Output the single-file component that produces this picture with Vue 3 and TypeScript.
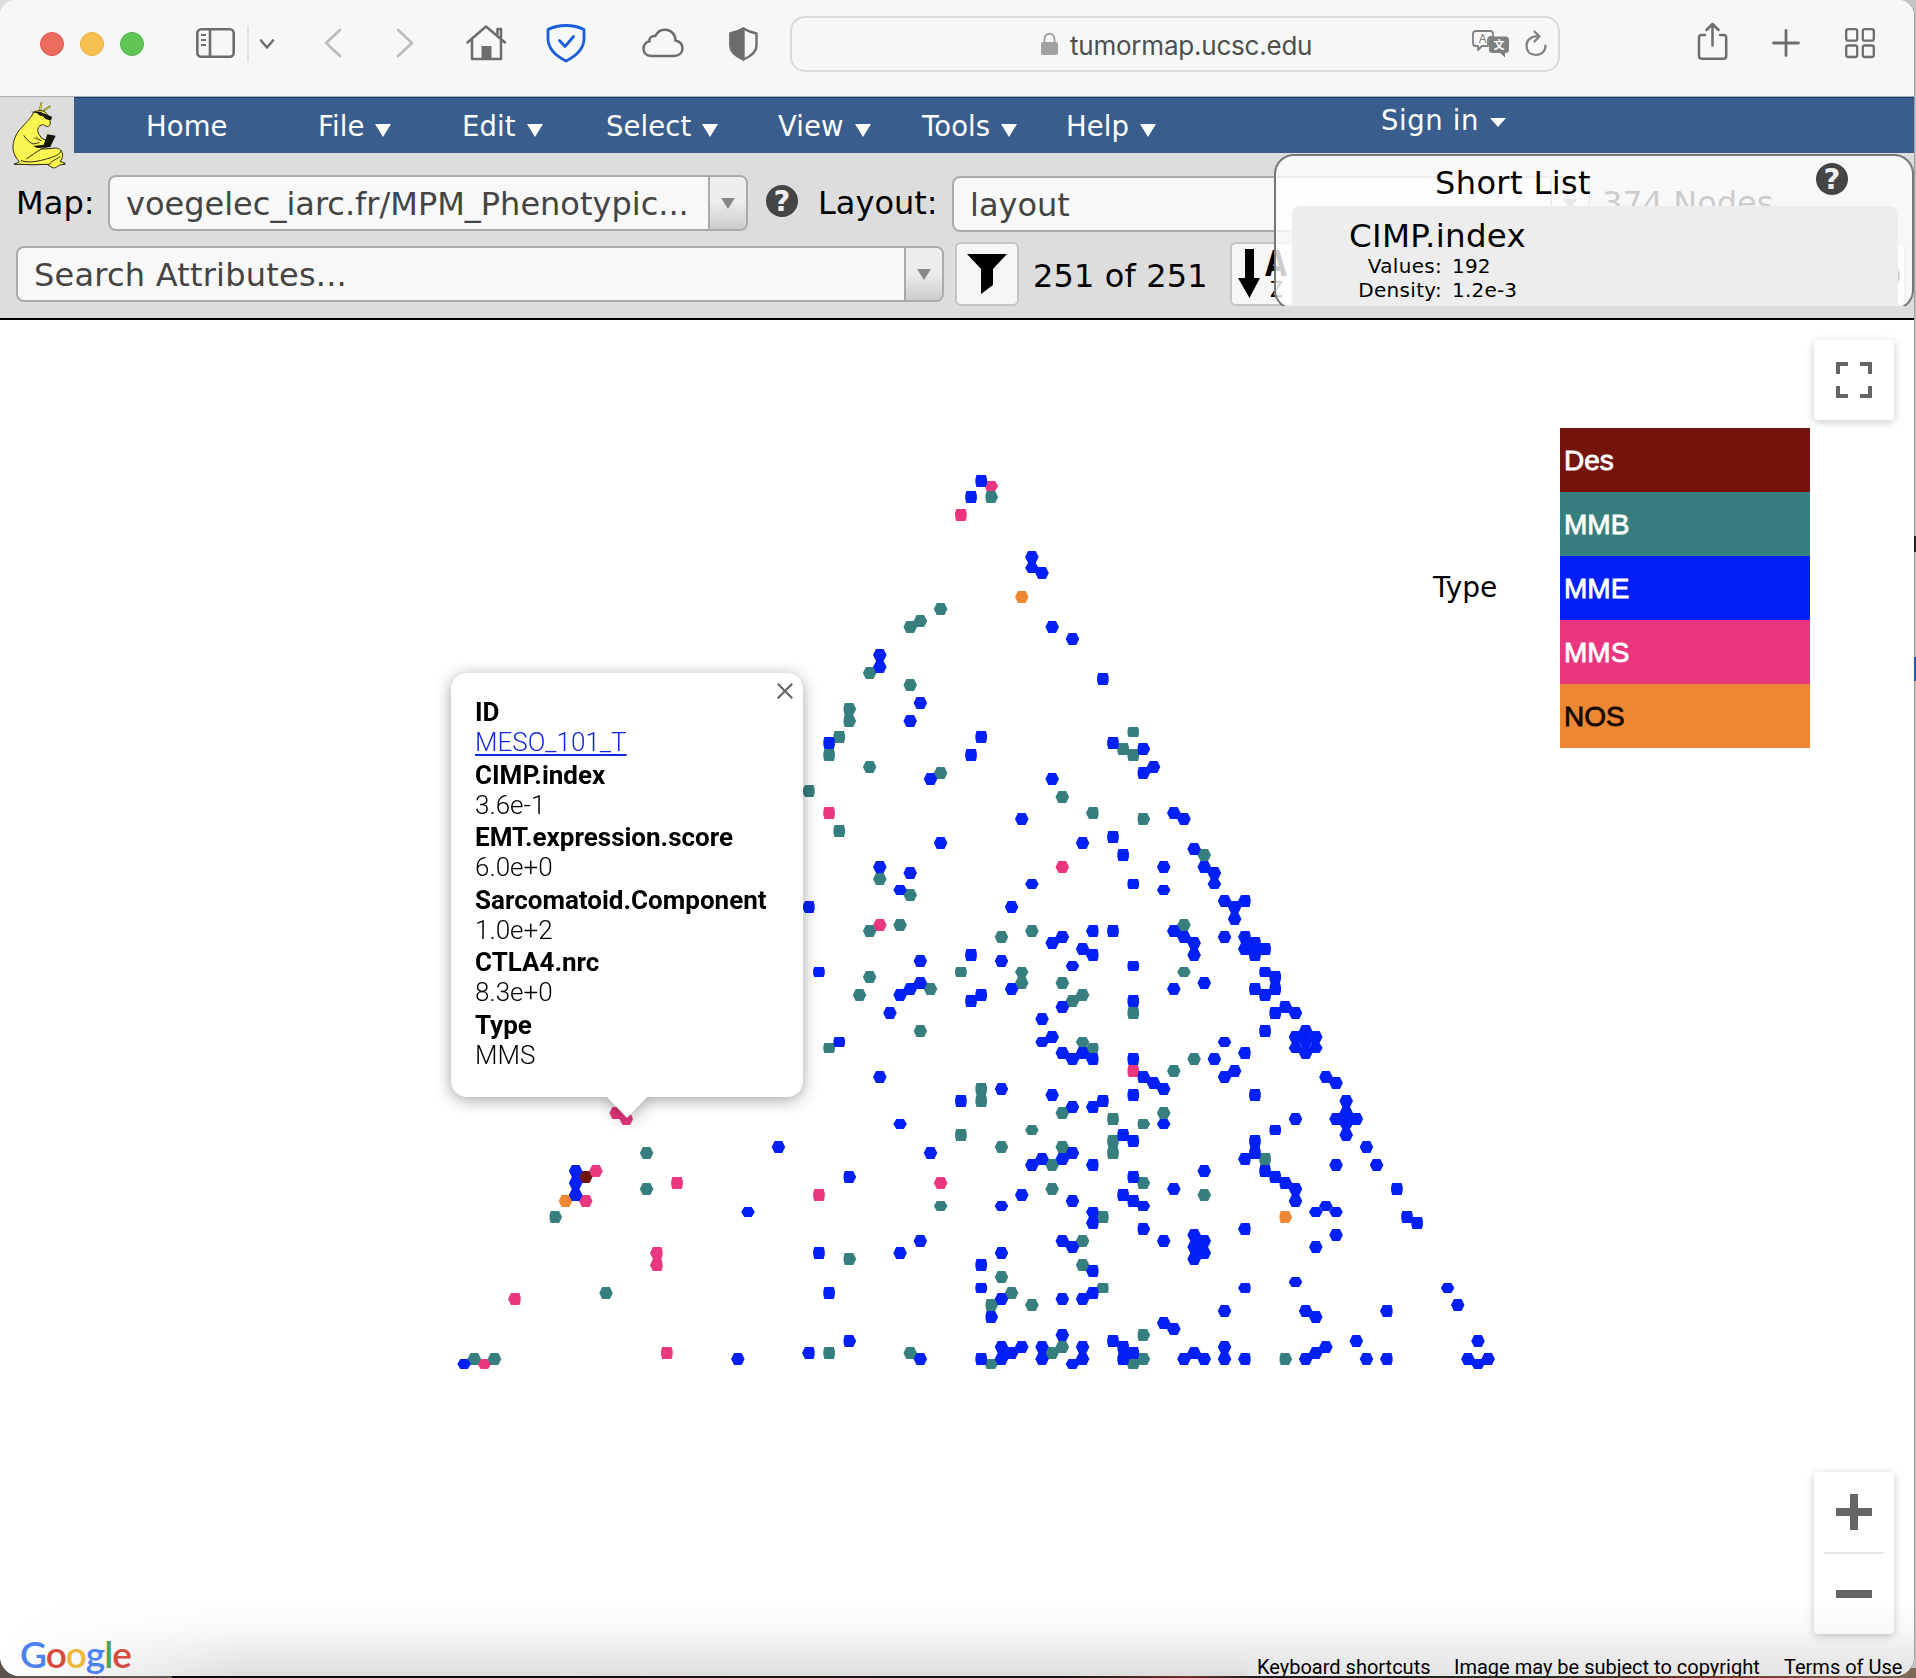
<script setup lang="ts">
interface Hexagon { col: number; y: number; kind: string; path: string }
interface MenuItem { label: string; width: number; arrow: boolean }

const menus: MenuItem[] = [
  { label: 'Home', width: 172, arrow: false },
  { label: 'File', width: 144, arrow: true },
  { label: 'Edit', width: 144, arrow: true },
  { label: 'Select', width: 172, arrow: true },
  { label: 'View', width: 144, arrow: true },
  { label: 'Tools', width: 144, arrow: true },
  { label: 'Help', width: 314, arrow: true },
]

const legend = [
  { label: 'Des', color: '#75140c', text: '#fff' },
  { label: 'MMB', color: '#377e7f', text: '#fff' },
  { label: 'MME', color: '#0020f5', text: '#fff' },
  { label: 'MMS', color: '#ea367f', text: '#fff' },
  { label: 'NOS', color: '#ee8733', text: '#140a00' },
]

const details = [
  { name: 'ID', value: 'MESO_101_T', link: true },
  { name: 'CIMP.index', value: '3.6e-1', link: false },
  { name: 'EMT.expression.score', value: '6.0e+0', link: false },
  { name: 'Sarcomatoid.Component', value: '1.0e+2', link: false },
  { name: 'CTLA4.nrc', value: '8.3e+0', link: false },
  { name: 'Type', value: 'MMS', link: false },
]

// Node positions per type: "column,y" on the hexagonal grid.
const nodes: Record<string, string> = {
  Des: '12,1177',
  NOS: '55,597 10,1201 81,1217',
  MMS: '52,486 49,515 36,813 59,867 41,925 66,1071 47,1183 35,1195 2,1364 5,1299 13,1171 12,1201 15,1113 16,1119 21,1183 19,1253 19,1265 20,1353',
  MMB: `52,497 47,609 45,621 44,627 40,673 44,685 38,709 38,721 37,737 36,755 40,767 34,791 37,831 47,773 66,732 65,749
    66,755 59,797 62,813 67,819 41,879 44,895 73,855 71,925 71,972 66,1013 72,1059 40,931 43,925 53,937 56,931 49,972
    55,972 55,983 59,983 40,977 39,995 46,989 61,995 60,1001 45,1031 36,1048 61,1042 62,1048 51,1089 51,1101 59,1113
    64,1119 56,1130 49,1135 53,1147 59,1147 58,1165 64,1141 64,1153 58,1189 47,1206 63,1217 61,1241 38,1259 53,1277
    61,1265 54,1293 52,1305 56,1305 63,1288 36,1353 44,1353 52,1364 58,1353 59,1347 70,1071 69,1113 67,1124 79,1159
    67,1183 73,1195 67,1335 66,1364 67,1359 81,1359 1,1359 3,1359 9,1217 14,1293 18,1153 18,1189`,
  MME: `51,481 50,497 56,557 56,568 57,573 58,627 60,639 63,679 41,655 41,667 45,703 44,721 36,743 51,737 50,755 46,779
    58,779 64,743 67,749 68,767 67,773 70,813 71,819 55,819 47,843 61,843 64,837 65,855 72,849 69,867 69,890 66,884
    56,884 41,867 44,873 43,890 34,907 54,907 73,867 74,873 74,884 75,901 77,901 76,907 76,919 75,937 77,937 77,949
    78,943 78,955 79,949 79,972 80,977 80,989 78,989 79,995 81,1007 80,1013 82,1013 79,1031 83,1031 82,1037 84,1037
    83,1042 82,1048 84,1048 83,1053 70,931 71,937 72,943 72,955 62,931 64,931 61,949 62,955 66,966 73,983 70,989
    66,1001 75,1042 77,1053 74,1059 66,1059 58,943 59,937 50,955 53,961 60,966 45,961 35,972 54,989 45,983 44,989
    43,995 42,1013 51,995 50,1001 59,1007 57,1019 58,1037 57,1042 37,1042 59,1053 60,1059 61,1053 62,1059 41,1077
    53,1089 49,1101 58,1095 60,1107 62,1107 63,1101 43,1124 60,1153 59,1159 57,1159 56,1165 62,1165 46,1153 38,1177
    55,1195 60,1201 53,1206 62,1212 62,1223 59,1241 60,1247 45,1241 43,1253 35,1253 53,1253 51,1265 62,1271 51,1288
    53,1299 52,1317 59,1299 61,1299 62,1293 36,1293 38,1341 34,1353 45,1359 51,1359 53,1347 53,1359 54,1353 55,1347
    57,1347 57,1359 59,1335 61,1347 61,1359 60,1364 64,1341 67,1077 68,1083 69,1089 66,1095 75,1077 76,1071 78,1095
    85,1077 86,1083 87,1101 87,1113 87,1124 87,1135 86,1119 88,1119 82,1119 80,1130 69,1124 65,1135 66,1141 78,1141
    78,1153 77,1159 79,1171 80,1177 81,1183 82,1189 82,1201 86,1165 89,1147 90,1165 92,1189 93,1217 94,1223 84,1212
    85,1206 86,1212 86,1235 84,1247 66,1177 65,1195 66,1201 67,1206 70,1189 73,1171 67,1229 69,1241 72,1235 73,1241
    72,1247 73,1253 72,1259 77,1229 82,1282 77,1288 75,1311 83,1311 84,1317 91,1311 97,1288 98,1305 100,1341 88,1341
    69,1323 70,1329 65,1347 65,1359 66,1353 71,1359 72,1353 73,1359 75,1347 75,1359 77,1359 83,1359 84,1353 85,1347
    89,1359 91,1359 99,1359 100,1364 101,1359 0,1364 11,1171 11,1183 11,1195 27,1359 28,1212 31,1147`,
}

const MAP_TOP = 320
const rightFlat = [5, 19, 34, 48, 62, 77, 91]
const leftFlat = [9, 24, 38, 52, 67, 81, 95]

// Side points are clipped on columns that fall across a pixel boundary.
function hexPath(col: number, y: number): string {
  const cx = 464.1 + col * 10.139
  const cy = y - MAP_TOP
  const h = y % 2 ? 6 : 5
  const barrel = rightFlat.some((r, i) => col > r && col < leftFlat[i])
  const left = barrel || leftFlat.includes(col)
  const right = barrel || rightFlat.includes(col)
  const l = left
    ? `L${cx - 4.7} ${cy + h}L${cx - 5.8} ${cy + 2}L${cx - 5.8} ${cy - 2}L${cx - 4.7} ${cy - h}`
    : `L${cx - 3.8} ${cy + h}L${cx - 6.8} ${cy}L${cx - 3.8} ${cy - h}`
  const r = right
    ? `M${cx + 4.7} ${cy - h}L${cx + 5.8} ${cy - 2}L${cx + 5.8} ${cy + 2}L${cx + 4.7} ${cy + h}`
    : `M${cx + 3.8} ${cy - h}L${cx + 6.8} ${cy}L${cx + 3.8} ${cy + h}`
  return r + l + 'Z'
}

const hexagons: Hexagon[] = Object.entries(nodes).flatMap(([kind, list]) =>
  list.trim().split(/\s+/).map((pair) => {
    const [col, y] = pair.split(',').map(Number)
    return { col, y, kind, path: hexPath(col, y) }
  }),
)
const colorOf = (kind: string): string => legend.find((l) => l.label === kind)!.color
</script>

<template>
  <div class="desktop">
    <i class="speck dark"></i><i class="speck blue"></i>
    <div class="window">
      <div class="toolbar">
        <span class="light red"></span><span class="light yellow"></span><span class="light green"></span>
        <svg class="ic sidebar" width="42" height="34" viewBox="195 26 42 34" fill="none" stroke="#6c6e6d" stroke-width="2.6">
          <rect x="197.3" y="29.3" width="36.4" height="27.4" rx="4" /><path d="M210 29v28" />
          <path d="M201 35h5M201 40h5M201 45h5" stroke-width="2" />
        </svg>
        <span class="divider"></span>
        <svg class="ic chevron" width="16" height="12" viewBox="0 0 16 12" fill="none" stroke="#6c6e6d" stroke-width="2.6" stroke-linecap="round" stroke-linejoin="round"><path d="M2 2.5l6 7 6-7" /></svg>
        <svg class="ic back" width="18" height="30" viewBox="0 0 18 30" fill="none" stroke="#b9bbba" stroke-width="2.6" stroke-linecap="round" stroke-linejoin="round"><path d="M16 2L2 15l14 13" /></svg>
        <svg class="ic forward" width="18" height="30" viewBox="0 0 18 30" fill="none" stroke="#b9bbba" stroke-width="2.6" stroke-linecap="round" stroke-linejoin="round"><path d="M2 2l14 13L2 28" /></svg>
        <svg class="ic home" width="42" height="38" viewBox="466 23 42 38" fill="none" stroke="#6c6e6d" stroke-width="2.5" stroke-linejoin="round" stroke-linecap="round">
          <path d="M468.5 41.5L487 25.5l19 16M473 39v19h29V39M498.5 33v-5h3.5v8" /><path d="M482.5 58V45h10v13z" fill="#6c6e6d" stroke="none" />
        </svg>
        <svg class="ic adblock" width="42" height="40" viewBox="546 24 42 40" fill="none" stroke="#1b5cdc" stroke-width="2.8" stroke-linejoin="round" stroke-linecap="round">
          <path d="M567 26.5c7 0 13 1.5 18 4v9c0 10-8 17.5-18 22.5-10-5-18-12.5-18-22.5v-9c5-2.5 11-4 18-4z" /><path d="M560.5 41.5l5.5 6 8.5-10" />
        </svg>
        <svg class="ic cloud" width="44" height="32" viewBox="641 26 44 32" fill="none" stroke="#6c6e6d" stroke-width="2.5">
          <path d="M651 55c-5 0-7.5-3.5-7.5-7.5 0-3.5 2.5-6.5 6-7.2-.5-3.5 2-5.8 5.8-5.3 2-4.5 6-6.5 10.2-6.3 6 .3 10 5 10 10.8 4.5 1 7 4 7 7.800 0 4.700-3.500 7.700-8.500 7.700z" />
        </svg>
        <svg class="ic privacy" width="32" height="36" viewBox="728 26 32 36" stroke="#6c6e6d" stroke-width="2.4" stroke-linejoin="round">
          <path d="M743.5 28.5c4 2.5 8 4 13 5v12c0 6-5 10.500-13 14-8-3.500-13-8-13-14v-12c5-1 9-2.500 13-5z" fill="none" /><path d="M743.5 28.5c-4 2.5-8 4-13 5v12c0 6 5 10.5 13 14z" fill="#6c6e6d" />
        </svg>
        <div class="address">
          <svg width="17" height="24" viewBox="0 0 17 24"><rect y="10" width="17" height="13" rx="2" fill="#a0a2a1" /><path d="M3.5 11V7c0-7 10-7 10 0v4" fill="none" stroke="#a0a2a1" stroke-width="1.9" /></svg>
          <span class="url">tumormap.ucsc.edu</span>
          <svg class="translate" width="38" height="28" viewBox="0 0 38 28">
            <path d="M4 1h14q3 0 3 3v3h-2q-3 0-3 3v6h-6l-4 4v-4H4q-3 0-3-3V4q0-3 3-3z" fill="none" stroke="#7f8180" stroke-width="1.8" stroke-linejoin="round" />
            <rect x="17" y="6.5" width="20" height="16.5" rx="3.5" fill="#7f8180" /><path d="M27 22h6v5.5z" fill="#7f8180" />
            <text x="6.5" y="13" font-size="12" fill="#7f8180">A</text><text x="21.5" y="19" font-size="11" font-weight="700" fill="#fff">文</text>
          </svg>
          <svg class="reload" width="22" height="28" viewBox="0 0 22 28" fill="none" stroke="#7f8180" stroke-width="2.2" stroke-linecap="round" stroke-linejoin="round"><path d="M12 6.5c-6-.5-10.5 4-10.5 9 0 6 4 9.5 9.5 9.5s9.5-4 9.5-9.5M9.5 1.5l5 5-5 5" /></svg>
        </div>
        <svg class="ic share" width="34" height="40" viewBox="1696 22 34 40" fill="none" stroke="#6c6e6d" stroke-width="2.5" stroke-linecap="round" stroke-linejoin="round"><path d="M1705 35h-3.5q-2.5 0-2.5 2.5v18.5q0 2.800 2.800 2.800h21.600q2.800 0 2.800-2.800V37.5q0-2.500-2.700-2.500h-3.500M1712.500 45.500V24.500M1706.500 30l6-6 6 6" /></svg>
        <svg class="ic plus" width="30" height="30" viewBox="0 0 30 30" stroke="#6c6e6d" stroke-width="2.8" stroke-linecap="round"><path d="M2.5 15h25M15 2.5v25" /></svg>
        <svg class="ic tabs" width="32" height="32" viewBox="0 0 32 32" fill="none" stroke="#6c6e6d" stroke-width="2.3"><rect x="2.2" y="2.2" width="11" height="11.5" rx="2" /><rect x="18.8" y="2.2" width="11" height="11.5" rx="2" /><rect x="2.2" y="18.5" width="11" height="11.5" rx="2" /><rect x="18.8" y="18.5" width="11" height="11.5" rx="2" /></svg>
      </div>

      <header class="header">
        <div class="brand">
          <svg width="90" height="80" viewBox="0 0 270 240" stroke="#2a2a10" stroke-width="3" stroke-linejoin="round" stroke-linecap="round">
            <path d="M43 210h152" stroke-width="4" />
            <path d="M119 52L124 28M127 52l22-14" fill="none" stroke="#6b6620" stroke-width="6" />
            <path d="M119 52L124 29M127 52l21-13" fill="none" stroke="#e8dd45" stroke-width="3" />
            <path d="M101 55c9-7 31-8 38 3 6 8 11 17 12 30 0 9-8 12-15 8-3-2-6-5-12-3-12 5-13 17-7 28l8 12 14 6-6 16-15 2c3 6 8 9 15 8l32-3c15 0 23 12 23 22 0 8-4 14-8 18l15 6c-8 6-16 3-22 9-8 6-16 8-29-6-24 0-48 3-71 0H44l14-8c-16-18-22-36-18-55 5-26 16-38 32-55 12-14 20-20 29-38z" fill="#fbf552" />
            <path d="M72 125c6 10 14 18 27 25l18-4M64 200c22 8 52 2 78-6 22-6 38-12 42-24M80 194c22-14 42-32 64-36M146 214c4-12 22-17 34-26" fill="none" />
            <path d="M92 53h28l36 15-2 9c-12 2-18 0-24-10-8 0-14-3-18-9z" fill="#15150a" stroke="none" />
            <path d="M142 121l25 4-16 34-40 3-11-6 31-4z" fill="#15150a" stroke="none" />
            <path d="M102 132l22 8M108 128l14 12" stroke-width="2" fill="none" />
            <path d="M138 115v1M148 113v1M160 114v1M133 122v1" stroke="#d8cf40" stroke-width="3" />
          </svg>
        </div>
        <nav class="nav">
          <div v-for="m in menus" :key="m.label" class="menu" :style="{ width: m.width + 'px' }">
            {{ m.label }}<i v-if="m.arrow" class="tri"></i>
          </div>
          <div class="signin">Sign in<i class="tri small"></i></div>
        </nav>

        <div class="row maps">
          <span class="label map-label">Map:</span>
          <div class="select map-select"><span class="sel-text">voegelec_iarc.fr/MPM_Phenotypic...</span><span class="caret"><i></i></span></div>
          <span class="help">?</span>
          <span class="label layout-label">Layout:</span>
          <div class="select layout-select"><span class="sel-text">layout</span><span class="caret"><i></i></span></div>
          <span class="label count">374 Nodes</span>
        </div>

        <div class="row attrs">
          <div class="select search"><span class="sel-text">Search Attributes...</span><span class="caret"><i></i></span></div>
          <button class="tool"><svg width="40" height="40" viewBox="0 0 40 40"><path d="M0 0h40L26 15v16l-12 9V15z" /></svg></button>
          <span class="label total">251 of 251</span>
          <button class="tool sort">
            <svg width="52" height="52" viewBox="0 0 52 52"><path d="M7 1h9v29h6L11.5 50 0 30h7z" /><text x="27" y="28" font-size="35" font-weight="700" textLength="22" lengthAdjust="spacingAndGlyphs">A</text><text x="32" y="49" font-size="22" textLength="13" lengthAdjust="spacingAndGlyphs">Z</text></svg>
          </button>
          <button class="tool last"><span>)</span></button>
        </div>

        <div class="short-clip">
          <section class="short-list">
            <div class="short-head"><h2>Short List</h2><span class="help">?</span></div>
            <div class="card">
              <div class="card-title">CIMP.index</div>
              <div class="stat"><span>Values:</span><b>192</b></div>
              <div class="stat"><span>Density:</span><b>1.2e-3</b></div>
            </div>
          </section>
        </div>
      </header>

      <main class="map">
        <svg class="nodes" width="1914" height="1356" viewBox="0 0 1914 1356">
          <path v-for="(h, i) in hexagons" :key="i" :d="h.path" :fill="colorOf(h.kind)" />
        </svg>

        <div class="info">
          <svg class="close" width="16" height="16" viewBox="0 0 16 16" stroke="#666" stroke-width="2.2"><path d="M.7.7l14.6 14.6M15.3.7L.7 15.3" /></svg>
          <dl>
            <template v-for="d in details" :key="d.name">
              <dt>{{ d.name }}</dt>
              <dd><a v-if="d.link">{{ d.value }}</a><template v-else>{{ d.value }}</template></dd>
            </template>
          </dl>
          <i class="tail"></i>
        </div>

        <div class="control fullscreen">
          <svg width="36" height="36" viewBox="0 0 36 36" fill="none" stroke="#666" stroke-width="4"><path d="M12 2H2v10M24 2h10v10M2 24v10h10M34 24v10H24" /></svg>
        </div>

        <div class="legend">
          <span class="legend-title">Type</span>
          <div class="swatches">
            <div v-for="l in legend" :key="l.label" class="swatch" :style="{ background: l.color, color: l.text }">{{ l.label }}</div>
          </div>
        </div>

        <div class="control zoom">
          <svg width="36" height="36" viewBox="0 0 36 36" fill="#666"><path d="M14 0h8v14h14v8H22v14h-8V22H0v-8h14z" /></svg>
          <hr />
          <svg width="36" height="36" viewBox="0 0 36 36" fill="#666"><path d="M0 14h36v8H0z" /></svg>
        </div>

        <div class="shade"></div>
        <div class="google"><span class="b">G</span><span class="r">o</span><span class="y">o</span><span class="b">g</span><span class="g">l</span><span class="r">e</span></div>
        <footer class="terms"><span class="t1">Keyboard shortcuts</span><span class="t2">Image may be subject to copyright</span><span class="t3">Terms of Use</span></footer>
      </main>
    </div>
  </div>
</template>

<style>
html, body { margin: 0; overflow: hidden; }
</style>

<style scoped>
* { box-sizing: border-box; }
.desktop { position: relative; width: 1916px; height: 1678px; overflow: hidden; background: linear-gradient(90deg, #5b554e 0 9%, #0b0a0c 9% 28%, #1d1612 40%, #111 55%, #6b3325 62%, #17151a 66%, #20301f 80%, #743625 90%, #7a6c58 100%); font-family: "DejaVu Sans", sans-serif; color: #000; }
.desktop::before { content: ""; position: absolute; right: 0; top: 0; width: 20px; height: 1668px; background: #c5c5c5; }
.desktop::after { content: ""; position: absolute; left: 0; top: 0; width: 20px; height: 40px; background: #dedede; }
.speck { position: absolute; right: 0; width: 2px; z-index: 3; }
.speck.dark { top: 536px; height: 16px; background: #222; }
.speck.blue { top: 657px; height: 24px; background: #2458a8; }
.window { position: relative; z-index: 2; width: 1915px; height: 1676px; border-right: 1px solid #9d9d9d; border-radius: 16px 16px 20px 20px; overflow: hidden; background: #fff; }
.toolbar { display: flex; align-items: center; height: 97px; padding: 0 0 9px 40px; background: #f6f8f7; border-bottom: 1px solid #aeb0af; }
.ic { flex: none; display: block; }
.sidebar { margin-left: 51px; }
.chevron { margin-left: 10px; }
.back { margin-left: 49px; }
.forward { margin-left: 54px; }
.home { margin-left: 51px; }
.adblock { margin-left: 38px; }
.cloud { margin-left: 54px; }
.privacy { margin-left: 43px; }
.share { margin-left: 136px; position: relative; top: -2px; }
.plus { margin-left: 41px; position: relative; top: -1px; }
.tabs { margin-left: 43px; position: relative; top: -1px; }
.light { flex: none; width: 24px; height: 24px; border-radius: 50%; margin-right: 16px; border: 1px solid; }
.light.red { background: #ed6a5f; border-color: #df5a50; }
.light.yellow { background: #f5bf4f; border-color: #e2ae42; }
.light.green { background: #61c554; border-color: #52b245; margin-right: 0; }
.divider { flex: none; width: 2px; height: 36px; margin-left: 10px; background: #e2e4e3; }
.sidebar, .home, .adblock, .cloud, .back, .forward { position: relative; top: -1px; }
.address { flex: none; position: relative; display: flex; align-items: center; width: 770px; height: 56px; margin-left: 30px; padding-left: 249px; border: 2px solid #d8dad9; border-radius: 15px; }
.url { margin-left: 12px; width: 260px; font: 400 26px "Inter", sans-serif; letter-spacing: -.22px; color: #4d4f4e; white-space: nowrap; padding-top: 3px; }
.translate { position: absolute; left: 680px; top: 12px; font-family: "Inter", "Noto Sans CJK SC", sans-serif; }
.reload { position: absolute; left: 733px; top: 12px; }

.header { position: relative; height: 223px; background: #ddd; border-bottom: 2px solid #000; }
.brand { position: absolute; left: 0; top: -3px; }
.brand svg { display: block; }
.nav { display: flex; height: 56px; margin-left: 74px; padding-left: 72px; background: #395d8d; border-top: 1px solid #1c3f70; color: #fff; font-size: 27.5px; line-height: 54px; letter-spacing: .1px; }
.menu { flex: none; display: flex; padding-top: 1px; }
.signin { flex: none; display: flex; margin-top: -5px; padding-left: 1px; letter-spacing: .6px; }
.tri { width: 0; height: 0; margin: 25px 0 0 11px; border: 8px solid transparent; border-top: 13px solid #fff; border-bottom: 0; }
.tri.small { margin-top: 25px; border-top-width: 9px; margin-left: 11px; }
.row { display: flex; align-items: center; }
.maps { height: 56px; margin-top: 22px; padding-left: 16px; }
.attrs { height: 64px; margin-top: 11px; padding-left: 16px; }
.label { flex: none; font-size: 32px; line-height: 58px; white-space: nowrap; }
.map-label { width: 92px; letter-spacing: .1px; }
.select { flex: none; display: flex; height: 56px; border: 2px solid #aaa; border-radius: 8px; background: #f8f8f8; color: #444; font-size: 32px; line-height: 54px; overflow: hidden; }
.sel-text { flex: 1; padding-left: 16px; white-space: nowrap; }
.caret { flex: none; width: 38px; border-left: 2px solid #aaa; background: linear-gradient(#eee, #eee 45%, #ccc); }
.caret i { display: block; margin: 21px 0 0 11px; width: 0; border: 7px solid transparent; border-top: 11px solid #888; border-bottom: 0; }
.map-select { width: 640px; }
.help { flex: none; width: 32px; height: 32px; border-radius: 50%; background: #454545; color: #eee; font: 700 29px/33px "DejaVu Sans", sans-serif; text-align: center; }
.maps .help { margin: -4px 0 0 18px; }
.layout-label { width: 134px; margin-left: 20px; }
.layout-select { width: 638px; height: 56px; margin-top: 1px; }
.count { margin-left: 12px; }
.search { width: 928px; }
.search .sel-text { padding-left: 16px; letter-spacing: .22px; }
.tool { flex: none; display: flex; align-items: center; justify-content: center; width: 64px; height: 64px; margin-left: 11px; padding: 0; border: 2px solid #c4c4c4; border-radius: 6px; background: #f6f6f6; }
.total { width: 179px; margin-left: 14px; padding-top: 3px; letter-spacing: .15px; }
.tool.sort { margin-left: 18px; font-family: "DejaVu Sans", sans-serif; justify-content: flex-start; padding-left: 6px; width: 66px; }
.tool.last { margin-left: 546px; font-size: 20px; justify-content: flex-end; padding-right: 3px; color: #000; }
.short-clip { position: absolute; left: 1274px; top: 57px; width: 640px; height: 152px; overflow: hidden; }
.short-list { height: 156px; border: 2px solid #777; border-radius: 20px; background: rgba(255, 255, 255, .8); }
.short-head { display: flex; height: 50px; }
.short-head h2 { width: 381px; margin: 0 0 0 159px; font-size: 32px; font-weight: 400; line-height: 54px; letter-spacing: .4px; }
.short-head .help { margin: 7px 0 0 0; }
.card { height: 110px; margin: 0 14px 0 16px; padding: 1px 0 0 57px; border-radius: 8px; background: #ededed; }
.card-title { font-size: 32.5px; line-height: 58px; height: 48px; letter-spacing: .3px; }
.stat { display: flex; height: 24px; font-size: 20px; line-height: 22px; }
.stat span { width: 93px; text-align: right; letter-spacing: .3px; }
.stat b { margin-left: 10px; font-weight: 400; letter-spacing: .2px; }

.map { position: relative; height: 1356px; background: #fff; }
.nodes { position: absolute; left: 0; top: 0; }
.info { position: absolute; left: 451px; top: 353px; width: 352px; height: 424px; border-radius: 16px; background: #fff; filter: drop-shadow(0 3px 8px rgba(0, 0, 0, .36)); font-family: "Roboto", sans-serif; }
.info dl { margin: 0; padding: 22px 0 0 24px; font-size: 26px; }
.info dt { height: 33px; line-height: 34px; font-weight: 700; letter-spacing: 0; white-space: nowrap; }
.info dd { height: 29.6px; margin: 0; line-height: 28px; font-weight: 300; }
.info a { color: #1229e0; text-decoration: underline; text-decoration-thickness: 2px; text-underline-offset: 3px; }
.close { position: absolute; right: 10px; top: 10px; }
.tail { position: absolute; left: 155px; top: 423px; width: 42px; height: 22px; background: #fff; clip-path: polygon(0 0, 100% 0, 50% 100%); }
.control { position: absolute; left: 1814px; width: 80px; border-radius: 4px; background: #fff; box-shadow: 0 2px 8px rgba(0, 0, 0, .22); display: flex; flex-direction: column; align-items: center; }
.fullscreen { top: 20px; height: 80px; justify-content: center; }
.zoom { top: 1152px; height: 162px; padding: 22px 0; justify-content: space-between; }
.zoom hr { width: 60px; height: 2px; margin: 0; border: 0; background: #e6e6e6; }
.legend { position: absolute; left: 1433px; top: 108px; width: 377px; display: flex; justify-content: space-between; align-items: center; }
.legend-title { font-size: 28px; padding-bottom: 2px; }
.swatches { width: 250px; }
.swatch { height: 64px; padding-left: 4px; font: 400 28px/65px "Liberation Sans", sans-serif; -webkit-text-stroke: .8px currentColor; }
.shade { position: absolute; left: 0; bottom: 0; width: 100%; height: 80px; background: linear-gradient(rgba(0, 0, 0, 0), rgba(0, 0, 0, .025) 40%, rgba(0, 0, 0, .13)); -webkit-mask-image: linear-gradient(90deg, transparent, #000 240px); }
.google { position: absolute; left: 20px; bottom: 0; font: 600 37px/44px "Lato", sans-serif; letter-spacing: -1px; }
.b { color: #4c82ee; } .r { color: #d64b3d; } .y { color: #edb83c; } .g { color: #4fa357; }
.terms { position: absolute; right: 0; bottom: 0; display: flex; gap: 1px; height: 22px; font: 400 20px/26px "Roboto", sans-serif; overflow: hidden; white-space: nowrap; }
.terms span { background: rgba(235, 235, 235, .55); padding-left: 10px; }
.t1 { width: 196px; } .t2 { width: 329px; } .t3 { width: 140px; }
</style>
